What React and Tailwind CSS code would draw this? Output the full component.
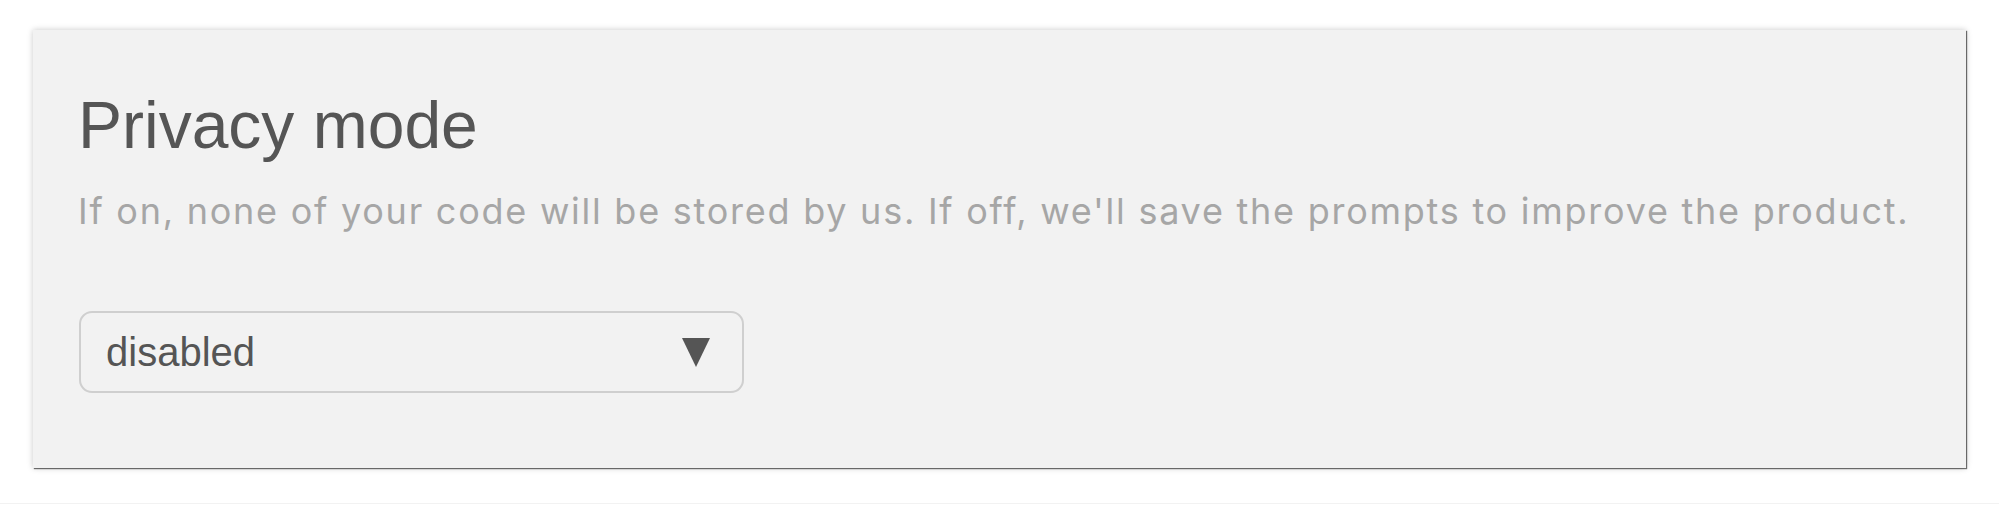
export default function App() {
  return (
    <div className="w-[1999px] h-[504px] bg-white border-b border-[#f2f2f2] pt-[30px] pl-[33px]">
      <div
        className="w-[1933px] h-[438px] bg-[#f2f2f2] shadow-[1px_1px_1px_rgba(0,0,0,0.55),0_0_6px_rgba(0,0,0,0.22)] pt-[62px] pl-[45px] flex flex-col items-start"
        style={{ fontFamily: '"Liberation Sans", Arial, sans-serif' }}
      >
        <h1 className="text-[66px] leading-none text-[#555555] font-normal">Privacy mode</h1>
        <p
          className="mt-[35px] text-[36px] leading-none text-[#a6a6a6] tracking-[1.75px] whitespace-nowrap"
          style={{ fontFamily: 'Inter, "Liberation Sans", sans-serif' }}
        >
          If on, none of your code will be stored by us. If off, we'll save the prompts to improve the product.
        </p>
        <div className="mt-[82px] ml-px w-[665px] h-[82px] rounded-[13px] border-2 border-[#cfcfcf] flex items-center justify-between pl-[25px] pr-[32px]">
          <span className="text-[40px] leading-none text-[#555555]">disabled</span>
          <svg width="28" height="29" viewBox="0 0 28 29" className="block">
            <polygon points="0,0 28,0 14,29" fill="#555555" />
          </svg>
        </div>
      </div>
    </div>
  );
}
